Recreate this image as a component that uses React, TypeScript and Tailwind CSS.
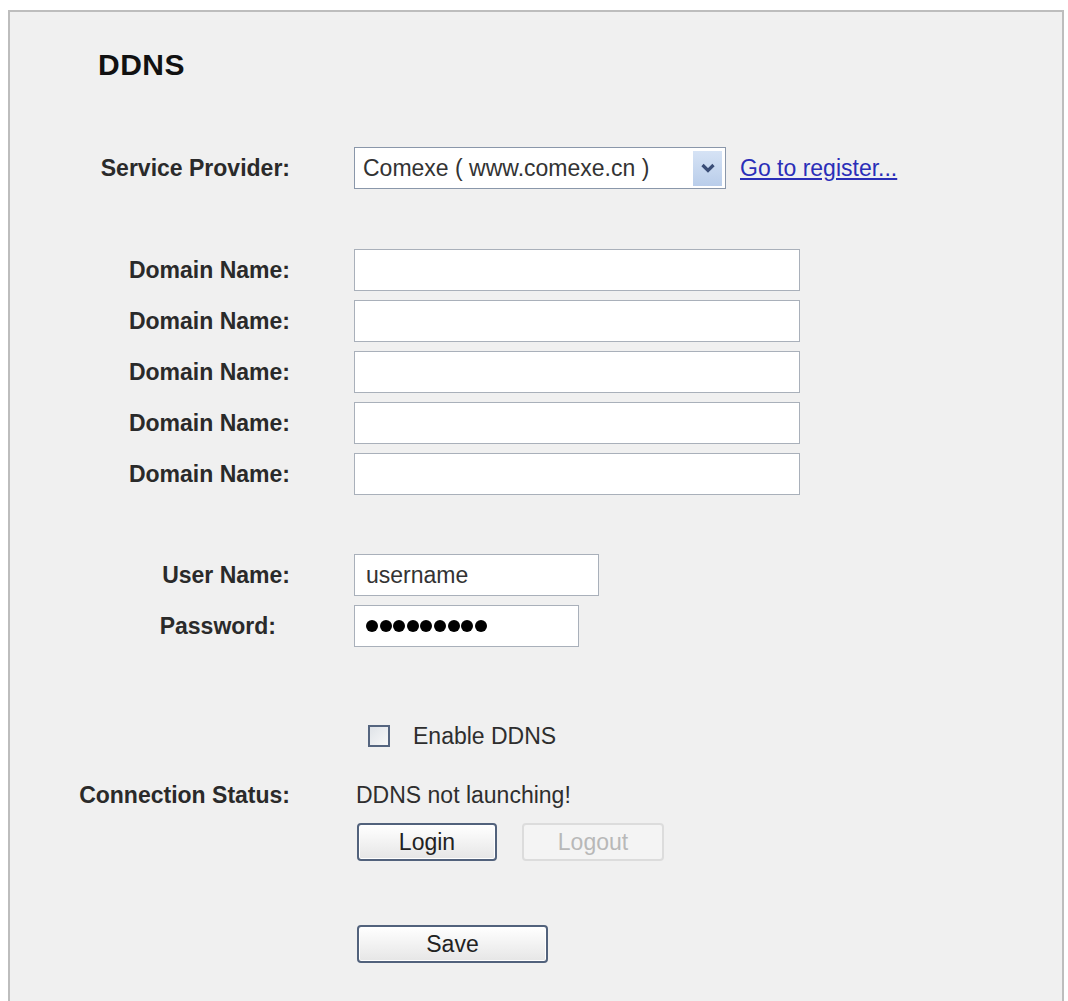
import React from "react";

const label = "w-[280px] shrink-0 text-right font-bold text-[#2a2a2a] text-[23px]";

function Row({ name, className = "", labelClass = "", children }: { name?: string; className?: string; labelClass?: string; children?: React.ReactNode }) {
  return (
    <div className={"flex items-center " + className}>
      <div className={label + " " + labelClass}>{name}</div>
      <div className="ml-[64px] flex items-center">{children}</div>
    </div>
  );
}

function TextBox({ w, children }: { w: string; children?: React.ReactNode }) {
  return (
    <div className={"flex h-[42px] items-center border border-[#a9b0ba] bg-white pl-[11px] text-[23px] text-[#333] " + w}>
      {children}
    </div>
  );
}

function Button({ label, disabled }: { label: string; disabled?: boolean }) {
  return disabled ? (
    <div className="flex h-[38px] w-[142px] items-center justify-center rounded-[4px] border-2 border-[#dcdcdc] bg-[#f4f4f4] text-[23px] text-[#b8b8b8]">
      {label}
    </div>
  ) : (
    <div className="flex h-[38px] items-center justify-center rounded-[4px] border-2 border-[#52627c] bg-gradient-to-b from-white to-[#e6e6e6] text-[23px] text-[#222] shadow-[inset_0_0_0_1px_#ffffff]">
      {label}
    </div>
  );
}

export default function App() {
  return (
    <div className="h-screen bg-white pt-[10px] pl-[8px] pr-[4px] font-['Liberation_Sans',Arial,sans-serif]">
      <div className="flex h-full flex-col border-2 border-b-0 border-[#bdbdbd] bg-[#f0f0f0]">
        {/* Title */}
        <div className="mt-[32px] flex h-[40px] items-center pl-[88px] text-[30px] font-bold tracking-[0.5px] text-[#111]">
          DDNS
        </div>

        {/* Service provider */}
        <Row name="Service Provider:" className="mt-[63px] h-[42px]">
          <div className="flex h-[42px] w-[372px] items-center border border-[#8a97aa] bg-white pl-[8px] text-[23px] text-[#333]">
            <span className="flex-1">Comexe ( www.comexe.cn )</span>
            <div className="mr-[3px] flex h-[35px] w-[29px] items-center justify-center bg-gradient-to-b from-[#d6e3f5] to-[#b9cdea]">
              <svg width="16" height="12" viewBox="0 0 16 12">
                <path d="M2.5 3 L8 8.5 L13.5 3" fill="none" stroke="#3a4d77" strokeWidth="3.2" />
              </svg>
            </div>
          </div>
          <a className="ml-[14px] text-[23px] text-[#2a2eb8] underline">Go to register...</a>
        </Row>

        {/* Domain names */}
        <div className="mt-[60px] flex flex-col gap-[9px]">
          {[0, 1, 2, 3, 4].map((i) => (
            <Row key={i} name="Domain Name:" className="h-[42px]">
              <TextBox w="w-[446px]" />
            </Row>
          ))}
        </div>

        {/* Credentials */}
        <div className="mt-[59px] flex flex-col gap-[9px]">
          <Row name="User Name:" className="h-[42px]">
            <TextBox w="w-[245px]">username</TextBox>
          </Row>
          <Row name="Password:" labelClass="pr-[14px]" className="h-[42px]">
            <TextBox w="w-[225px]">
              <div className="flex gap-[1.6px]">
                {Array.from({ length: 9 }).map((_, i) => (
                  <span key={i} className="h-[12px] w-[12px] rounded-full bg-black" />
                ))}
              </div>
            </TextBox>
          </Row>
        </div>

        {/* Enable */}
        <Row className="mt-[68px] h-[42px]">
          <div className="ml-[14px] h-[22px] w-[22px] border-2 border-[#55657f] bg-gradient-to-br from-[#dfe3e8] to-[#f8f8f8]" />
          <span className="ml-[23px] text-[23px] text-[#2e2e2e]">Enable DDNS</span>
        </Row>

        {/* Status */}
        <Row name="Connection Status:" className="mt-[23px] h-[30px]">
          <span className="ml-[2px] text-[23px] text-[#2e2e2e]">DDNS not launching!</span>
        </Row>

        <Row className="mt-[13px] h-[38px]">
          <div className="ml-[3px] flex gap-[25px]">
            <div className="w-[140px]">
              <Button label="Login" />
            </div>
            <Button label="Logout" disabled />
          </div>
        </Row>

        <Row className="mt-[64px] h-[38px]">
          <div className="ml-[3px] w-[191px]">
            <Button label="Save" />
          </div>
        </Row>
      </div>
    </div>
  );
}
